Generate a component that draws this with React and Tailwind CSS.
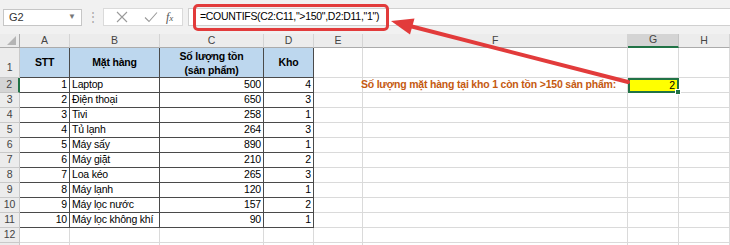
import React from 'react';

const FONT = { fontFamily: '"Liberation Sans", Arial, sans-serif' };

const columns = ['A', 'B', 'C', 'D', 'E', 'F', 'G', 'H'];

const items = [
  [1, 'Laptop', 500, 4],
  [2, 'Điện thoại', 650, 3],
  [3, 'Tivi', 258, 1],
  [4, 'Tủ lạnh', 264, 3],
  [5, 'Máy sấy', 890, 1],
  [6, 'Máy giặt', 210, 2],
  [7, 'Loa kéo', 265, 3],
  [8, 'Máy lạnh', 120, 1],
  [9, 'Máy lọc nước', 157, 2],
  [10, 'Máy lọc không khí', 90, 1],
];

const gridCell = 'h-[15px] border-r border-b border-[#dadada] flex items-center';
const tableCell = 'h-[15px] border-r border-b border-[#4a4a4a] flex items-center';

const FormulaBar = () => (
  <div className="relative h-[34px] bg-[#f1f1f1] flex items-center text-[11px] text-[#333]">
    {/* name box */}
    <div className="ml-[3px] w-[79px] h-[17px] bg-white border border-[#c6c6c6] flex items-center justify-between pl-[5px] pr-[5px]">
      <span>G2</span>
      <span className="text-[8px] text-[#777]">▼</span>
    </div>
    <div className="w-[21px] flex justify-center text-[#a6a6a6] text-[12px]">⋮</div>
    {/* cancel / enter / fx */}
    <div className="w-[80px] h-[18px] bg-white border border-[#dadada] flex items-center">
      <svg width="28" height="16" viewBox="0 0 28 16" className="ml-[5px]">
        <path d="M8 3 L18 13 M18 3 L8 13" stroke="#9a9a9a" strokeWidth="1.1" fill="none" />
      </svg>
      <svg width="28" height="16" viewBox="0 0 28 16">
        <path d="M8 8.5 L12 12.5 L20 3.5" stroke="#9a9a9a" strokeWidth="1.1" fill="none" />
      </svg>
      <span className="ml-[1px] italic text-[12px] text-[#555]" style={{ fontFamily: '"Liberation Serif", serif' }}>
        f<span className="text-[9px]">x</span>
      </span>
    </div>
    {/* formula input */}
    <div className="ml-[5px] flex-1 h-[18px] bg-white border-y border-l border-[#d0d0d0] flex items-center pl-[11px] text-[10.5px] tracking-[-0.3px] text-black">
      =COUNTIFS(C2:C11,"&gt;150",D2:D11,"1")
    </div>
    {/* annotation box */}
    <div className="absolute left-[193px] top-[4px] w-[196px] h-[27px] border-[3px] border-[#e23b3b] rounded-[5px]" />
  </div>
);

const HeaderRow = () => (
  <>
    <div className="h-[14px] bg-[#ececec] border-r border-b border-[#ababab] flex items-end justify-end">
      <svg width="11" height="11" viewBox="0 0 11 11" className="mr-[2px] mb-[1px]">
        <path d="M10 1 L10 10 L1 10 Z" fill="#b5b5b5" />
      </svg>
    </div>
    {columns.map((c) => (
      <div
        key={c}
        className={
          c === 'G'
            ? 'h-[14px] bg-[#d4d4d4] border-r border-[#c4c4c4] border-b-2 border-b-[#217346] flex items-center justify-center text-[#444]'
            : 'h-[14px] bg-[#ececec] border-r border-b border-r-[#d4d4d4] border-b-[#ababab] flex items-center justify-center text-[#444]'
        }
      >
        {c}
      </div>
    ))}
  </>
);

const RowHeader = ({ n, tall }) => (
  <div
    className={
      n === 2
        ? 'h-[15px] bg-[#d4d4d4] border-b border-[#c4c4c4] border-r-2 border-r-[#217346] flex items-center justify-center text-[#444]'
        : `${tall ? 'h-[30px] items-end pb-[1px]' : 'h-[15px] items-center'} bg-[#ececec] border-r border-b border-[#c9c9c9] flex justify-center text-[#444]`
    }
  >
    {n}
  </div>
);

const App = () => {
  return (
    <div className="w-[730px] h-[245px] overflow-hidden bg-white relative" style={FONT}>
      <FormulaBar />
      <div className="grid grid-cols-[20px_50px_90px_104px_50px_49px_265px_51px_51px] text-[10.5px] tracking-[-0.2px]">
        <HeaderRow />

        {/* row 1 : table header */}
        <RowHeader n={1} tall />
        <div className="h-[30px] bg-[#bdd7ee] border-r border-b border-[#4a4a4a] flex items-center justify-center font-bold">STT</div>
        <div className="h-[30px] bg-[#bdd7ee] border-r border-b border-[#4a4a4a] flex items-center justify-center font-bold">Mặt hàng</div>
        <div className="h-[30px] bg-[#bdd7ee] border-r border-b border-[#4a4a4a] flex flex-col items-center justify-center font-bold leading-[14px]">
          <span>Số lượng tồn</span>
          <span>(sản phẩm)</span>
        </div>
        <div className="h-[30px] bg-[#bdd7ee] border-r border-b border-[#4a4a4a] flex items-center justify-center font-bold">Kho</div>
        <div className="h-[30px] border-r border-b border-[#dadada]" />
        <div className="h-[30px] border-r border-b border-[#dadada]" />
        <div className="h-[30px] border-r border-b border-[#dadada]" />
        <div className="h-[30px] border-r border-b border-[#dadada]" />

        {/* rows 2 - 11 */}
        {items.map(([stt, name, qty, kho], i) => {
          const row = i + 2;
          return (
            <React.Fragment key={row}>
              <RowHeader n={row} />
              <div className={`${tableCell} justify-end pr-[2px]`}>{stt}</div>
              <div className={`${tableCell} pl-[2px] whitespace-nowrap`}>{name}</div>
              <div className={`${tableCell} justify-end pr-[2px]`}>{qty}</div>
              <div className={`${tableCell} justify-end pr-[2px]`}>{kho}</div>
              <div className={gridCell} />
              {row === 2 ? (
                <div className={`${gridCell} justify-end pr-[11px] font-bold text-[#c55a11] whitespace-nowrap`}>
                  Số lượng mặt hàng tại kho 1 còn tồn &gt;150 sản phẩm:
                </div>
              ) : (
                <div className={gridCell} />
              )}
              {row === 2 ? (
                <div className="relative h-[15px] bg-[#ffff00] border-2 border-[#217346] flex items-center justify-end pr-[2px]">
                  2
                  <div className="absolute -right-[4px] -bottom-[4px] w-[6px] h-[6px] bg-[#217346] border border-white" />
                </div>
              ) : (
                <div className={gridCell} />
              )}
              <div className={gridCell} />
            </React.Fragment>
          );
        })}

        {/* row 12 and the edge of row 13 */}
        <RowHeader n={12} />
        {columns.map((c) => (
          <div key={c} className={gridCell} />
        ))}
        <div className="h-[15px] bg-[#ececec] border-r border-[#c9c9c9]" />
        {columns.map((c) => (
          <div key={`r13-${c}`} className="h-[15px] border-r border-[#dadada]" />
        ))}
      </div>

      {/* red arrow pointing at the formula */}
      <svg className="absolute left-0 top-0 pointer-events-none" width="730" height="245" viewBox="0 0 730 245">
        <line x1="628" y1="82" x2="408" y2="25.5" stroke="#e23b3b" strokeWidth="4" strokeLinecap="round" />
        <path d="M391 21 L414.5 18.5 L410 34.5 Z" fill="#e23b3b" />
      </svg>
    </div>
  );
};

export default App;
